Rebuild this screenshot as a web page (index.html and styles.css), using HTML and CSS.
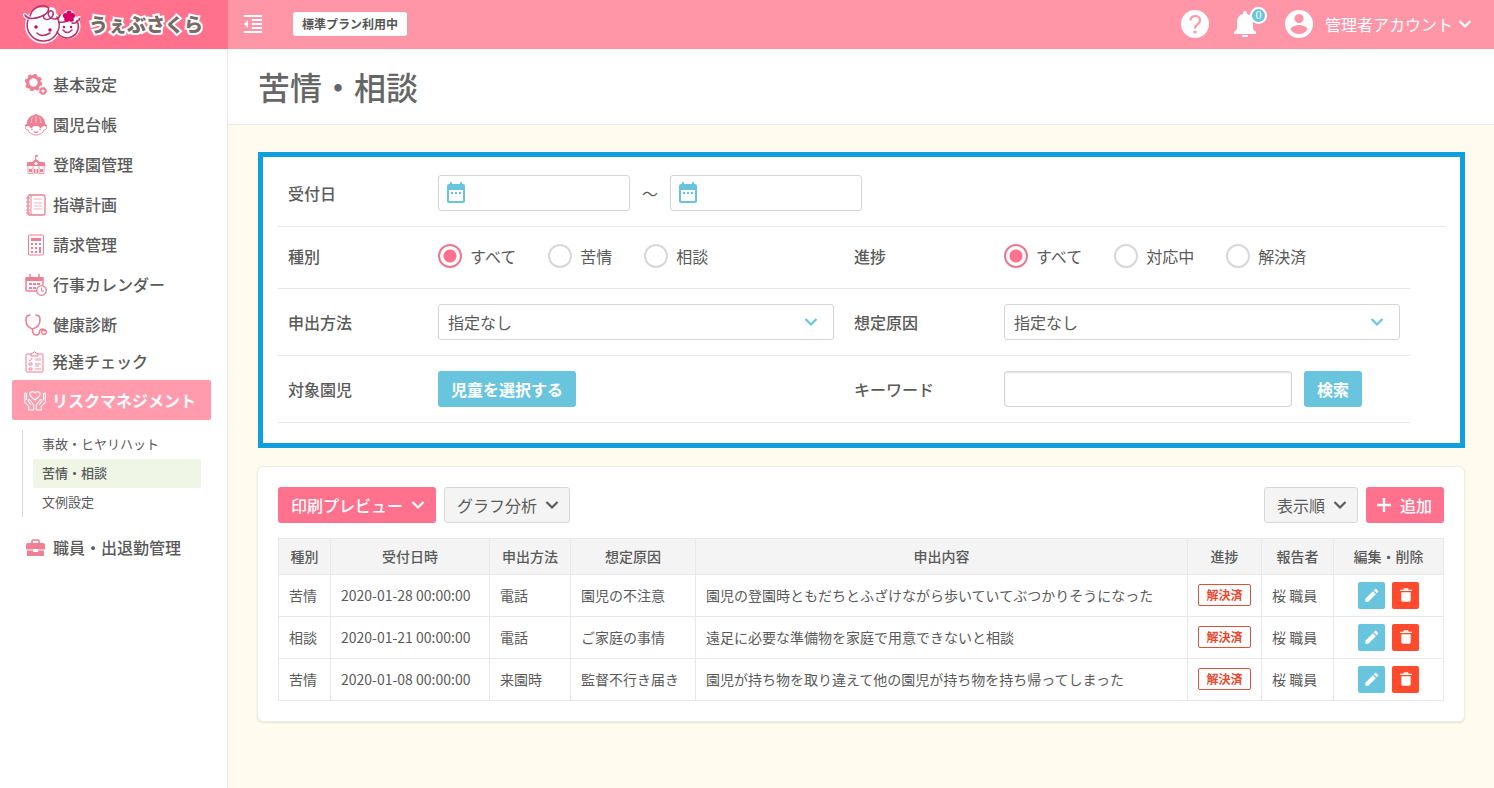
FILE: index.html
```html
<!DOCTYPE html>
<html lang="ja">
<head>
<meta charset="utf-8">
<meta name="viewport" content="width=device-width, initial-scale=1">
<title>苦情・相談</title>
<link rel="stylesheet" href="styles.css">
</head>
<body>
<svg class="sprite" aria-hidden="true">
  <symbol id="chevron" viewBox="0 0 14 10"><path d="M1.500 2L7 7.500 12.500 2" fill="none" stroke="currentColor" stroke-width="2.200"/></symbol>
  <symbol id="calendar" viewBox="0 0 20 22"><path d="M1 4a2 2 0 0 1 2-2h1V0h2v2h8V0h2v2h1a2 2 0 0 1 2 2v15a2 2 0 0 1-2 2H3a2 2 0 0 1-2-2zM3 8v11h14V8zM5 10h2v2H5zM9 10h2v2H9zM13 10h2v2h-2z" fill="currentColor" fill-rule="evenodd"/></symbol>
  <symbol id="pencil" viewBox="0 0 24 24"><path d="M2 17.500V22h4.500L17.800 10.700l-4.500-4.500zM21 7.500a1.300 1.300 0 0 0 0-1.900l-2.600-2.600a1.300 1.300 0 0 0-1.900 0l-2 2L19 9.500z" fill="currentColor"/></symbol>
  <symbol id="trash" viewBox="0 0 24 24"><path d="M5 8h14v12a2 2 0 0 1-2 2H7a2 2 0 0 1-2-2zM3 4h5l1-2h6l1 2h5v2H3z" fill="currentColor"/></symbol>
</svg>

<header class="header">
  <a class="brand" href="#">
    <svg class="brand-mark" viewBox="0 0 58 42" aria-hidden="true">
      <g fill="#fff" stroke="#fff" stroke-width="4" stroke-linejoin="round" stroke-linecap="round">
        <circle cx="20" cy="22.500" r="16"/><circle cx="44.500" cy="23" r="11"/><circle cx="46" cy="13" r="4"/>
        <path d="M2 12q3 5 10 3M28 6q4 0 3 6M54 18l2-3" fill="none"/>
      </g>
      <g fill="none" stroke="#b8306f" stroke-width="1.500" stroke-linecap="round">
        <path d="M5 17a16 16 0 1 0 29-3"/>
        <path d="M2 12c3 5 11 4 17 1c7-3 9-9 3-10c-7-1-13 3-15 10"/>
        <path d="M21 12c-2 4 3 6 7 3c4-4 2-8-1-7c-4 2-1 8 5 8q4 0 5-4"/>
        <path d="M34 29a11 11 0 1 0 20-11q-1 3-5 2M36 19c6 1 9-1 11-3M54 18q2 0 3-3"/>
        <path d="M14 30q5 5 13 0M40 27q4 5 9 0"/>
      </g>
      <g fill="#d80067"><circle cx="13" cy="24" r="1.700"/><circle cx="27" cy="27" r="1.700"/><circle cx="41" cy="24" r="1.200"/><circle cx="48" cy="24" r="1.200"/>
        <circle cx="46" cy="10" r="2.600"/><circle cx="49.500" cy="12.500" r="2.600"/><circle cx="48.200" cy="16.200" r="2.600"/><circle cx="43.800" cy="16.200" r="2.600"/><circle cx="42.500" cy="12.500" r="2.600"/></g>
      <circle cx="46" cy="13.500" r="2" fill="#d80067"/>
    </svg>
    <span class="brand-name">うぇぶさくら</span>
  </a>
  <div class="header-bar">
    <button class="icon-button" type="button" aria-label="メニューを閉じる">
      <svg width="18" height="18" viewBox="0 0 18 18"><path d="M0 0h18v2H0zM8 4h10v2H8zM8 8h10v2H8zM8 12h10v2H8zM0 16h18v2H0zM4 5v8L0 9z" fill="currentColor"/></svg>
    </button>
    <span class="plan">標準プラン利用中</span>
    <div class="header-tools">
      <button class="icon-button" type="button" aria-label="ヘルプ">
        <svg width="28" height="28" viewBox="0 0 28 28"><circle cx="14" cy="14" r="14" fill="#fff"/><path d="M9.500 10.500C9.500 4.500 19 4.500 19 10.500C19 14.500 14 14 14 18.500" fill="none" stroke="#ff96a8" stroke-width="2.200"/><circle cx="14" cy="22" r="1.600" fill="#ff96a8"/></svg>
      </button>
      <button class="icon-button bell" type="button" aria-label="お知らせ">
        <svg width="22" height="26" viewBox="0 0 22 26"><path d="M9 3V2a2 2 0 0 1 4 0v1c4 1 6 4 6 8v7l3 3v2H0v-2l3-3v-7c0-4 2-7 6-8zM8 24h6a3 3 0 0 1-6 0z" fill="currentColor"/></svg>
        <span class="bell-count">0</span>
      </button>
      <button class="account" type="button">
        <svg width="28" height="28" viewBox="0 0 28 28"><path d="M14 0a14 14 0 1 0 0 28a14 14 0 0 0 0-28zm0 4a4.600 4.600 0 1 1 0 9.200A4.600 4.600 0 0 1 14 4zm0 20c-4 0-7-2-8.500-4.500c0-3 5.500-4.500 8.500-4.500s8.500 1.500 8.500 4.500C21 22 18 24 14 24z" fill="currentColor"/></svg>
        <span>管理者アカウント</span>
        <svg width="14" height="10"><use href="#chevron"/></svg>
      </button>
    </div>
  </div>
</header>

<div class="layout">
  <nav class="sidebar" aria-label="メインメニュー">
    <a class="nav-item" href="#">
      <svg class="nav-icon" viewBox="0 0 22 22"><circle cx="8.500" cy="8.500" r="5.800" fill="none" stroke="currentColor" stroke-width="3.200"/><circle cx="8.500" cy="8.500" r="7.600" fill="none" stroke="currentColor" stroke-width="2.400" stroke-dasharray="3.200 2.770"/><circle cx="18" cy="17" r="2.500" fill="none" stroke="currentColor" stroke-width="1.800"/><circle cx="18" cy="17" r="3.400" fill="none" stroke="currentColor" stroke-width="1.200" stroke-dasharray="1.500 1.170"/></svg>
      基本設定</a>
    <a class="nav-item" href="#">
      <svg class="nav-icon" viewBox="0 0 22 22"><path d="M2 9.500C2 4 6 1 10 1V0h2v1c4 0 8 3 8 8.500l2 1.500v1H0v-1z" fill="currentColor"/><path d="M11 2v7M7.500 3Q6 6 6 9M14.500 3q1.500 3 1.500 6" fill="none" stroke="#fff" stroke-width=".5"/><path d="M2 12c-3 0-2 4 1 4c1 3 4 5 8 5s7-2 8-5c3 0 4-4 1-4" fill="none" stroke="currentColor" stroke-width=".9"/><path d="M4 12l2 2.500L9 12zM18 12l-2 2.500-3-2.500zM8 17.500h6q-3 3.500-6 0z" fill="currentColor"/><circle cx="7" cy="15.500" r=".8" fill="currentColor"/><circle cx="15" cy="15.500" r=".8" fill="currentColor"/></svg>
      園児台帳</a>
    <a class="nav-item" href="#">
      <svg class="nav-icon" viewBox="0 0 22 22"><path d="M10.500 1v5M11 1l2 1-2 1" fill="currentColor" stroke="currentColor" stroke-width=".8"/><path d="M11 5l4 3h4.500l1 4h-19l1-4H7z" fill="currentColor"/><path d="M3 12v7.500h5V11h6v8.500h5V12" fill="none" stroke="currentColor" stroke-width=".8"/><circle cx="11" cy="9.500" r="1.600" fill="#fff"/><path d="M4 15h3v3H4zM15 15h3v3h-3zM9 15h4v4.500H9z" fill="currentColor"/><path d="M11 15v4" stroke="#fff"/></svg>
      登降園管理</a>
    <a class="nav-item" href="#">
      <svg class="nav-icon" viewBox="0 0 22 22"><rect x="3" y="1" width="17" height="20" rx="2" fill="none" stroke="currentColor" stroke-width="1.300"/><path d="M6 1v20M1 4h4M1 8h4M1 12h4M1 16h4M1 19h4" stroke="currentColor"/><path d="M9 5h8M9 9h8M9 12h8M9 15h8" stroke="currentColor" stroke-width=".6"/></svg>
      指導計画</a>
    <a class="nav-item" href="#">
      <svg class="nav-icon" viewBox="0 0 22 22"><rect x="3.500" y="1" width="15" height="20" rx="1" fill="none" stroke="currentColor"/><path d="M6 4h10v3H6zM6 9h2v2H6zM10 9h2v2h-2zM14 9h2v2h-2zM6 13h2v2H6zM10 13h2v2h-2zM6 17h2v2H6zM10 17h2v2h-2zM14 13h2v6h-2z" fill="currentColor"/></svg>
      請求管理</a>
    <a class="nav-item" href="#">
      <svg class="nav-icon" viewBox="0 0 22 22"><path d="M1 3h17v4H1z" fill="currentColor"/><path d="M12 17H2L1 16V4h17v7M5 0v5M14 0v5" fill="none" stroke="currentColor" stroke-width="1.500"/><path d="M4 9h3v2H4zM8 9h3v2H8zM12 9h3v2h-3zM4 13h3v2H4zM8 13h3v2H8z" fill="currentColor"/><circle cx="16.500" cy="16.500" r="4.800" fill="#fff" stroke="currentColor" stroke-width="1.300"/><path d="M16.500 13.500v3.500H19" fill="none" stroke="currentColor"/></svg>
      行事カレンダー</a>
    <a class="nav-item" href="#">
      <svg class="nav-icon" viewBox="0 0 22 22"><path d="M5 1L2 2q-1 1-1 4c0 5 3 8 6.500 9C11 14 15 11 15 6q0-3-1-4l-3-1M7.500 15c0 8 7 7 7 3c0-3 4-4 5-1" fill="none" stroke="currentColor" stroke-width="1.600" stroke-linecap="round"/><circle cx="19" cy="18" r="2.300" fill="none" stroke="currentColor" stroke-width="1.400"/></svg>
      健康診断</a>
    <a class="nav-item nav-item-short" href="#">
      <svg class="nav-icon" viewBox="0 0 22 22"><rect x="2" y="3" width="17" height="18" rx="1" fill="none" stroke="currentColor"/><path d="M7 3l2-1 1.500-1.500L12 2l2 1v2H7z" fill="#fff" stroke="currentColor"/><path d="M5 9l1 1 2-3M5 12h3v2H5zM5 17h3v2H5zM11 13h6M11 18h6M11 15h4" fill="none" stroke="currentColor" stroke-width=".9"/><path d="M11 7h6v3h-6z" fill="currentColor" opacity=".4"/></svg>
      発達チェック</a>
    <a class="nav-item nav-item-active" href="#">
      <svg class="nav-icon" viewBox="0 0 22 22"><path d="M11 10L6.500 6C4 3 8.500 0 11 3c2.500-3 7 0 4.500 3zM2.500 3.500L.7 3v9l4 4.500V20h5v-5L6 10q-2-1-2 1l3 4M2.500 3v7M19.500 3.500l1.800-.5v9l-4 4.500V20h-5v-5L16 10q2-1 2 1l-3 4M19.500 3v7" fill="none" stroke="currentColor" stroke-width="1.100" stroke-linejoin="round"/></svg>
      リスクマネジメント</a>
    <div class="subnav">
      <a class="subnav-item" href="#">事故・ヒヤリハット</a>
      <a class="subnav-item subnav-item-active" href="#" aria-current="page">苦情・相談</a>
      <a class="subnav-item" href="#">文例設定</a>
    </div>
    <a class="nav-item" href="#">
      <svg class="nav-icon" viewBox="0 0 22 22"><path d="M7 6V4q0-1 1-1h5q1 0 1 1v2" fill="none" stroke="currentColor" stroke-width="1.600"/><path d="M3 6h15q2 0 2 2v4.500h-7V12H8v.5H1V8q0-2 2-2zM2 13.500h6V15h5v-1.500h6V19H2z" fill="currentColor"/></svg>
      職員・出退勤管理</a>
  </nav>

  <main class="main">
    <div class="page-head"><h1>苦情・相談</h1></div>
    <div class="content">
      <form class="filter">
        <div class="filter-row">
          <div class="field">
            <label class="field-label" for="date-from">受付日</label>
            <div class="date-range">
              <span class="date"><input class="control" id="date-from" type="text"><svg class="date-icon"><use href="#calendar"/></svg></span>
              <span>～</span>
              <span class="date"><input class="control" type="text" aria-label="受付日（終了）"><svg class="date-icon"><use href="#calendar"/></svg></span>
            </div>
          </div>
        </div>
        <div class="filter-row filter-row-pair filter-row-radios">
          <div class="field" role="radiogroup" aria-labelledby="kind-label">
            <span class="field-label" id="kind-label">種別</span>
            <div class="radios">
              <label class="radio"><input type="radio" name="kind" checked>すべて</label>
              <label class="radio"><input type="radio" name="kind">苦情</label>
              <label class="radio"><input type="radio" name="kind">相談</label>
            </div>
          </div>
          <div class="field" role="radiogroup" aria-labelledby="progress-label">
            <span class="field-label" id="progress-label">進捗</span>
            <div class="radios">
              <label class="radio"><input type="radio" name="progress" checked>すべて</label>
              <label class="radio"><input type="radio" name="progress">対応中</label>
              <label class="radio"><input type="radio" name="progress">解決済</label>
            </div>
          </div>
        </div>
        <div class="filter-row filter-row-pair">
          <div class="field">
            <label class="field-label" for="method">申出方法</label>
            <span class="select"><select class="control" id="method"><option>指定なし</option></select><svg class="select-arrow"><use href="#chevron"/></svg></span>
          </div>
          <div class="field">
            <label class="field-label" for="cause">想定原因</label>
            <span class="select"><select class="control" id="cause"><option>指定なし</option></select><svg class="select-arrow"><use href="#chevron"/></svg></span>
          </div>
        </div>
        <div class="filter-row filter-row-pair">
          <div class="field">
            <span class="field-label">対象園児</span>
            <button class="button button-blue" type="button">児童を選択する</button>
          </div>
          <div class="field">
            <label class="field-label" for="keyword">キーワード</label>
            <div class="search">
              <input class="control keyword" id="keyword" type="text">
              <button class="button button-blue" type="submit">検索</button>
            </div>
          </div>
        </div>
      </form>

      <section class="card">
        <div class="toolbar">
          <button class="button button-pink" type="button">印刷プレビュー<svg width="14" height="10"><use href="#chevron"/></svg></button>
          <button class="button button-gray" type="button">グラフ分析<svg width="14" height="10"><use href="#chevron"/></svg></button>
          <button class="button button-gray toolbar-end" type="button">表示順<svg width="14" height="10"><use href="#chevron"/></svg></button>
          <button class="button button-pink button-add" type="button"><svg width="16" height="16" viewBox="0 0 16 16"><path d="M8 1v14M1 8h14" stroke="currentColor" stroke-width="2.400"/></svg>追加</button>
        </div>
        <table class="records">
          <colgroup><col class="col-kind"><col class="col-date"><col class="col-method"><col class="col-cause"><col><col class="col-progress"><col class="col-reporter"><col class="col-actions"></colgroup>
          <thead>
            <tr><th>種別</th><th>受付日時</th><th>申出方法</th><th>想定原因</th><th>申出内容</th><th>進捗</th><th>報告者</th><th>編集・削除</th></tr>
          </thead>
          <tbody>
            <tr><td>苦情</td><td>2020-01-28 00:00:00</td><td>電話</td><td>園児の不注意</td><td>園児の登園時ともだちとふざけながら歩いていてぶつかりそうになった</td><td><span class="status">解決済</span></td><td>桜 職員</td>
              <td><div class="actions"><button class="action action-edit" type="button" aria-label="編集"><svg width="16" height="16"><use href="#pencil"/></svg></button><button class="action action-delete" type="button" aria-label="削除"><svg width="16" height="16"><use href="#trash"/></svg></button></div></td></tr>
            <tr><td>相談</td><td>2020-01-21 00:00:00</td><td>電話</td><td>ご家庭の事情</td><td>遠足に必要な準備物を家庭で用意できないと相談</td><td><span class="status">解決済</span></td><td>桜 職員</td>
              <td><div class="actions"><button class="action action-edit" type="button" aria-label="編集"><svg width="16" height="16"><use href="#pencil"/></svg></button><button class="action action-delete" type="button" aria-label="削除"><svg width="16" height="16"><use href="#trash"/></svg></button></div></td></tr>
            <tr><td>苦情</td><td>2020-01-08 00:00:00</td><td>来園時</td><td>監督不行き届き</td><td>園児が持ち物を取り違えて他の園児が持ち物を持ち帰ってしまった</td><td><span class="status">解決済</span></td><td>桜 職員</td>
              <td><div class="actions"><button class="action action-edit" type="button" aria-label="編集"><svg width="16" height="16"><use href="#pencil"/></svg></button><button class="action action-delete" type="button" aria-label="削除"><svg width="16" height="16"><use href="#trash"/></svg></button></div></td></tr>
          </tbody>
        </table>
      </section>
    </div>
  </main>
</div>
</body>
</html>
```

FILE: styles.css
```css
:root {
  --pink: #ff718d;
  --pink-light: #ff96a8;
  --blue: #69c4de;
  --red: #ff4a2d;
  --text: #5a5a5a;
  --line: #e8e8e8;
}

* { box-sizing: border-box; }

body {
  display: flex;
  flex-direction: column;
  min-height: 100vh;
  margin: 0;
  background: #fff;
  color: var(--text);
  font: 16px/24px "Noto Sans CJK JP", "Noto Sans", sans-serif;
}

button, input, select { margin: 0; color: inherit; font: inherit; }
button { padding: 0; border: 0; background: none; cursor: pointer; }
a { color: inherit; text-decoration: none; }
svg { flex: none; display: block; }
.sprite { position: absolute; width: 0; height: 0; }

/* Header */
.header { display: flex; min-height: 49px; color: #fff; }

.brand {
  display: flex;
  align-items: center;
  flex: none;
  gap: 8px;
  width: 228px;
  padding: 0 0 2px 23px;
  background: var(--pink);
}

.brand-mark { width: 58px; height: 42px; }

.brand-name {
  color: #776b68;
  font-size: 19px;
  font-weight: 900;
  -webkit-text-stroke: 4px #fff;
  paint-order: stroke fill;
}

.header-bar {
  display: flex;
  align-items: center;
  flex: 1;
  padding: 0 22px 1px 16px;
  background: var(--pink-light);
}

.icon-button { color: #fff; }

.plan {
  margin-left: 31px;
  padding: 0 9px;
  border-radius: 3px;
  background: #fff;
  color: #555;
  font-size: 12px;
  font-weight: 700;
}

.header-tools {
  display: flex;
  align-items: center;
  gap: 25px;
  margin-left: auto;
}

.bell { position: relative; }

.bell-count {
  position: absolute;
  top: -4px;
  left: 16px;
  width: 17px;
  height: 17px;
  border: 2px solid #fff;
  border-radius: 50%;
  background: var(--blue);
  font: 12px/13px "Liberation Serif", serif;
  text-align: center;
}

.account { display: flex; align-items: center; gap: 12px; margin-left: 4px; color: #fff; }
.account svg:last-child { margin-left: -7px; }

/* Sidebar */
.layout { display: flex; flex: 1; }

.sidebar {
  flex: none;
  width: 228px;
  padding: 16px 16px 0 12px;
  border-right: 1px solid var(--line);
}

.nav-item {
  display: flex;
  align-items: center;
  gap: 6px;
  min-height: 40px;
  padding: 0 0 2px 13px;
  font-weight: 500;
}

.nav-icon { width: 22px; height: 22px; margin-top: 2px; color: #ef7f92; }
.nav-item-short { min-height: 35px; padding: 0 0 4px 12px; }

.nav-item-active {
  padding: 0 0 0 12px;
  border-radius: 2px;
  background: #ff9bad;
  color: #fff;
  font-weight: 700;
}

.nav-item-active .nav-icon { color: #fff; }

.subnav {
  margin: 10px 10px 11px;
  padding-left: 10px;
  border-left: 1px solid #d8d8d8;
}

.subnav-item {
  display: block;
  padding: 0 9px 2px;
  border-radius: 2px;
  font-size: 13px;
  line-height: 27px;
}

.subnav-item-active { background: #eff6e6; font-weight: 500; }

/* Main area */
.main { display: flex; flex-direction: column; flex: 1; min-width: 0; }
.page-head { padding: 14px 30px 15px; border-bottom: 1px solid var(--line); }
h1 { margin: 0; color: #666; font-size: 32px; font-weight: 500; line-height: 46px; }
.content { flex: 1; padding: 27px 29px 27px 30px; background: #fffbee; }

/* Filter */
.filter {
  margin-bottom: 18px;
  padding: 3px 15px 20px;
  border: 5px solid #109fdd;
  background: #fff;
}

.filter-row {
  display: grid;
  min-height: 62px;
  padding: 15px 0;
  border-bottom: 1px solid var(--line);
}

.filter-row-pair { grid-template-columns: 1fr 1fr; width: 97%; }
.filter-row-radios { padding: 13px 0 16px; }
.field { display: flex; align-items: center; padding: 0 10px; }
.field-label { flex: none; width: 150px; font-weight: 500; }

.control {
  height: 36px;
  border: 1px solid #d5d5d5;
  border-radius: 3px;
  background: #fff;
}

.date-range { display: flex; align-items: center; gap: 12px; }
.date { position: relative; }
.date .control { display: block; width: 192px; padding: 0 10px 0 36px; }
.date-icon { position: absolute; top: 7px; left: 8px; width: 20px; height: 22px; color: var(--blue); }

.radios { display: flex; gap: 32px; }
.radio { display: flex; align-items: center; gap: 8px; }

.radio input {
  width: 24px;
  height: 24px;
  border: 2px solid #d8d8d8;
  border-radius: 50%;
  background: #fff;
  appearance: none;
}

.radio input:checked {
  border-color: #ea7a90;
  background: radial-gradient(circle, var(--pink) 6px, #fff 7px);
}

.select { position: relative; flex: 1; }
.select .control { display: block; width: 100%; padding: 0 9px; appearance: none; }
.select-arrow { position: absolute; top: 13px; right: 16px; width: 14px; height: 10px; color: var(--blue); pointer-events: none; }

.search { display: flex; gap: 12px; }
.keyword { width: 288px; padding: 0 10px; box-shadow: inset 0 1px 2px #e4e4e4; }

/* Buttons */
.button {
  display: flex;
  align-items: center;
  gap: 8px;
  height: 36px;
  padding: 0 13px;
  border-radius: 3px;
  font-weight: 500;
}

.button-blue { background: var(--blue); color: #fff; font-weight: 700; }
.button-pink { padding: 0 11px 0 13px; background: var(--pink); color: #fff; }
.button-gray { padding: 0 10px 0 12px; border: 1px solid #d8d8d8; background: #f4f4f4; font-weight: 400; }
.button-add { padding: 0 12px 0 10px; }

/* Records */
.card {
  margin-left: -1px;
  padding: 20px;
  border: 1px solid #f0ede4;
  border-radius: 6px;
  background: #fff;
  box-shadow: 0 1px 2px #e5e1d6;
}

.toolbar { display: flex; gap: 8px; margin-bottom: 15px; }
.toolbar-end { margin-left: auto; }

.records {
  width: 100%;
  border-collapse: collapse;
  table-layout: fixed;
  font-size: 14px;
  line-height: 20px;
}

.records th, .records td { border: 1px solid var(--line); }
.records th { padding: 7px 0 8px; background: #f4f4f4; font-weight: 500; }
.records td { height: 42px; padding: 0 10px 1px; }
.col-kind { width: 52px; }
.col-date { width: 159px; }
.col-method { width: 81px; }
.col-cause { width: 125px; }
.col-progress { width: 74px; }
.col-reporter { width: 72px; }
.col-actions { width: 110px; }

.status {
  display: block;
  border: 1px solid #d9543f;
  border-radius: 2px;
  color: #e8482f;
  font-size: 12px;
  font-weight: 700;
  text-align: center;
}

.actions { display: flex; justify-content: center; gap: 7px; }

.action {
  display: grid;
  place-items: center;
  width: 27px;
  height: 27px;
  border-radius: 2px;
  color: #fff;
}

.action-edit { background: var(--blue); }
.action-delete { background: var(--red); }
```
